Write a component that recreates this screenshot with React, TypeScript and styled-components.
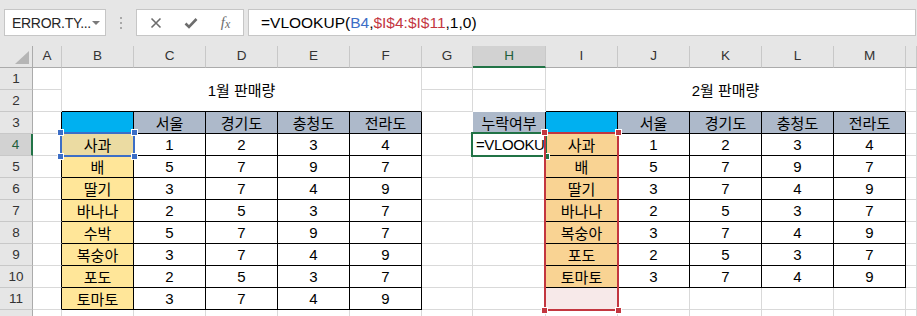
import React from 'react';
import styled, { createGlobalStyle } from 'styled-components';

const GREEN = '#217346';
const BLUE = '#3c6ec6';
const RED = '#c3363f';
const GRID = '#d9d9d9';
const CYAN = '#00b0f0';
const HEAD = '#adb9ca';
const YELLOW = '#ffe699';

const GlobalStyle = createGlobalStyle`
  html, body { margin: 0; padding: 0; background: #fff; overflow: hidden; }
  body { font-family: "Liberation Sans", "Noto Sans CJK KR", sans-serif; }
`;

const Toolbar = styled.div`
  height: 46px;
  box-sizing: border-box;
  background: #e6e6e6;
  display: flex;
  align-items: flex-start;
  padding: 9px 1px 0 4px;
`;

const NameBox = styled.div`
  width: 102px;
  height: 27px;
  box-sizing: border-box;
  background: #fff;
  border: 1px solid #c6c6c6;
  display: flex;
  align-items: center;
  justify-content: space-between;
  padding: 0 5px 0 7px;
  font: 14px "Liberation Sans", sans-serif;
  letter-spacing: -0.3px;
  color: #262626;
`;

const DropArrow = styled.span`
  width: 0;
  height: 0;
  border-left: 4px solid transparent;
  border-right: 4px solid transparent;
  border-top: 4px solid #7a7a7a;
`;

const Grip = styled.div`
  width: 30px;
  height: 27px;
  display: flex;
  flex-direction: column;
  align-items: center;
  justify-content: center;
  gap: 3px;
  span {
    width: 2px;
    height: 2px;
    background: #a8a8a8;
  }
`;

const ButtonGroup = styled.div`
  height: 27px;
  box-sizing: border-box;
  background: #fff;
  border: 1px solid #c6c6c6;
  display: flex;
  padding-left: 1px;
`;

const BarButton = styled.div`
  width: 35px;
  display: flex;
  align-items: center;
  justify-content: center;
  color: #6d6d6d;
`;

const Fx = styled.span`
  font: italic 15px "Liberation Serif", serif;
  color: #6d6d6d;
  sub {
    font-size: 12px;
    vertical-align: -1px;
  }
`;

const FormulaBox = styled.div`
  flex: 1;
  height: 27px;
  margin-left: 4px;
  box-sizing: border-box;
  background: #fff;
  border: 1px solid #c6c6c6;
  display: flex;
  align-items: center;
  padding: 1px 0 0 12px;
  font: 15.5px "Liberation Sans", sans-serif;
  color: #000;
`;

const Ref = styled.span<{ $color: string }>`
  color: ${p => p.$color};
`;

const Sheet = styled.div<{ $cols: string }>`
  display: grid;
  grid-template-columns: ${p => p.$cols};
  grid-template-rows: repeat(13, 22px);
  width: max-content;
`;

const Corner = styled.div`
  grid-column: 1;
  grid-row: 1;
  box-sizing: border-box;
  background: #e6e6e6;
  border-right: 1px solid #ababab;
  border-bottom: 1px solid #ababab;
  display: flex;
  align-items: flex-end;
  justify-content: flex-end;
  padding: 0 3px 3px 0;
`;

const ColHead = styled.div<{ $col: number; $active?: boolean }>`
  grid-column: ${p => p.$col};
  grid-row: 1;
  box-sizing: border-box;
  background: ${p => (p.$active ? '#d2d2d2' : '#e6e6e6')};
  border-right: 1px solid #c8c8c8;
  border-bottom: ${p => (p.$active ? `2px solid ${GREEN}` : '1px solid #ababab')};
  display: flex;
  align-items: center;
  justify-content: center;
  padding-bottom: ${p => (p.$active ? '1px' : '2px')};
  font: 13.5px "Liberation Sans", sans-serif;
  color: ${p => (p.$active ? '#1f5f3b' : '#333')};
`;

const RowHead = styled.div<{ $row: number; $active?: boolean }>`
  grid-column: 1;
  grid-row: ${p => p.$row};
  box-sizing: border-box;
  background: ${p => (p.$active ? '#d2d2d2' : '#e6e6e6')};
  border-bottom: 1px solid #c8c8c8;
  border-right: ${p => (p.$active ? `2px solid ${GREEN}` : '1px solid #ababab')};
  display: flex;
  align-items: center;
  justify-content: center;
  font: 13.5px "Liberation Sans", sans-serif;
  color: ${p => (p.$active ? '#1f5f3b' : '#333')};
`;

const Cell = styled.div<{
  $col: number;
  $row: number;
  $cs: number;
  $rs: number;
  $fill?: string;
  $right: string;
  $bottom: string;
  $left?: boolean;
}>`
  grid-column: ${p => p.$col} / span ${p => p.$cs};
  grid-row: ${p => p.$row} / span ${p => p.$rs};
  box-sizing: border-box;
  min-width: 0;
  background: ${p => p.$fill ?? '#fff'};
  border-right: 1px solid ${p => p.$right};
  border-bottom: 1px solid ${p => p.$bottom};
  display: flex;
  align-items: center;
  justify-content: ${p => (p.$left ? 'flex-start' : 'center')};
  padding-left: ${p => (p.$left ? '3px' : '0')};
  font: 15px "Liberation Sans", "Noto Sans CJK KR", sans-serif;
  letter-spacing: ${p => (p.$left ? '-0.4px' : '0')};
  color: #000;
  white-space: nowrap;
  overflow: hidden;
`;

const Frame = styled.div<{ $col: number; $row: number; $cs: number; $rs: number; $color: string }>`
  grid-column: ${p => p.$col} / span ${p => p.$cs};
  grid-row: ${p => p.$row} / span ${p => p.$rs};
  position: relative;
  z-index: 2;
  margin: -2px -1px -1px -2px;
  border: 2px solid ${p => p.$color};
  pointer-events: none;
`;

const Handle = styled.span<{ $color: string; $x: 'l' | 'r'; $y: 't' | 'b' }>`
  position: absolute;
  width: 5px;
  height: 5px;
  background: ${p => p.$color};
  border: 1px solid #fff;
  ${p => (p.$x === 'l' ? 'left: -5px;' : 'right: -5px;')}
  ${p => (p.$y === 't' ? 'top: -5px;' : 'bottom: -5px;')}
`;

// last column (N) only peeks in at the right edge
const COLS = ['A', 'B', 'C', 'D', 'E', 'F', 'G', 'H', 'I', 'J', 'K', 'L', 'M', ''];
const WIDTHS = [29, 72, 72, 72, 72, 72, 51, 73, 72, 72, 72, 72, 72, 11];
const ROWS = 12;
const VISIBLE_ROW_LABELS = 11;

const regions = ['서울', '경기도', '충청도', '전라도'];
const janRows: [string, number, number, number, number][] = [
  ['사과', 1, 2, 3, 4],
  ['배', 5, 7, 9, 7],
  ['딸기', 3, 7, 4, 9],
  ['바나나', 2, 5, 3, 7],
  ['수박', 5, 7, 9, 7],
  ['복숭아', 3, 7, 4, 9],
  ['포도', 2, 5, 3, 7],
  ['토마토', 3, 7, 4, 9],
];
const febRows = janRows.filter(r => r[0] !== '수박');

type CellData = { text?: string; fill?: string; left?: boolean };
const cells: Record<string, CellData> = {};
const key = (r: number, c: number) => `${r}:${c}`;
const put = (r: number, c: number, d: CellData) => {
  cells[key(r, c)] = d;
};

// 1월 table (B3:F11)
put(3, 1, { fill: CYAN });
regions.forEach((t, i) => put(3, 2 + i, { text: t, fill: HEAD }));
janRows.forEach(([name, ...nums], i) => {
  const r = 4 + i;
  put(r, 1, { text: name, fill: r === 4 ? '#ebdba2' : YELLOW });
  nums.forEach((n, j) => put(r, 2 + j, { text: String(n) }));
});

// 2월 table (I3:M10) + 누락여부
put(3, 7, { text: '누락여부', fill: HEAD });
put(4, 7, { text: '=VLOOKU', left: true });
put(3, 8, { fill: CYAN });
regions.forEach((t, i) => put(3, 9 + i, { text: t, fill: HEAD }));
febRows.forEach(([name, ...nums], i) => {
  const r = 4 + i;
  put(r, 8, { text: name, fill: '#f9d393' });
  nums.forEach((n, j) => put(r, 9 + j, { text: String(n) }));
});
put(11, 8, { fill: '#f7e9e9' });

const boxes = [
  [3, 1, 11, 5],
  [3, 8, 10, 12],
];
const merges = [
  { r: 1, c: 1, rs: 2, cs: 5, text: '1월 판매량' },
  { r: 1, c: 8, rs: 2, cs: 5, text: '2월 판매량' },
];

const bordered = (r: number, c: number) =>
  boxes.some(([r1, c1, r2, c2]) => r >= r1 && r <= r2 && c >= c1 && c <= c2);
const filled = (r: number, c: number) => !!cells[key(r, c)]?.fill;
const lineColor = (r1: number, c1: number, r2: number, c2: number) => {
  if (bordered(r1, c1) || bordered(r2, c2)) return '#000';
  if (filled(r1, c1) || filled(r2, c2)) return 'transparent';
  return GRID;
};
const covered = (r: number, c: number) =>
  merges.some(m => r >= m.r && r < m.r + m.rs && c >= m.c && c < m.c + m.cs && !(r === m.r && c === m.c));

const Corners = ({ color }: { color: string }) => (
  <>
    <Handle $color={color} $x="l" $y="t" />
    <Handle $color={color} $x="r" $y="t" />
    <Handle $color={color} $x="l" $y="b" />
    <Handle $color={color} $x="r" $y="b" />
  </>
);

export default function App() {
  const template = `33px ${WIDTHS.map(w => `${w}px`).join(' ')}`;
  const body: React.ReactNode[] = [];

  for (let r = 1; r <= ROWS; r++) {
    body.push(
      <RowHead key={`rh${r}`} $row={r + 1} $active={r === 4}>
        {r <= VISIBLE_ROW_LABELS ? r : ''}
      </RowHead>
    );
    COLS.forEach((_, c) => {
      if (covered(r, c)) return;
      const m = merges.find(x => x.r === r && x.c === c);
      const rs = m ? m.rs : 1;
      const cs = m ? m.cs : 1;
      const er = r + rs - 1;
      const ec = c + cs - 1;
      const d = cells[key(r, c)] ?? {};
      body.push(
        <Cell
          key={key(r, c)}
          $col={c + 2}
          $row={r + 1}
          $cs={cs}
          $rs={rs}
          $fill={d.fill}
          $left={d.left}
          $right={lineColor(er, ec, er, ec + 1)}
          $bottom={lineColor(er, ec, er + 1, ec)}
        >
          {m ? m.text : d.text}
        </Cell>
      );
    });
  }

  return (
    <>
      <GlobalStyle />
      <Toolbar>
        <NameBox>
          <span>ERROR.TY...</span>
          <DropArrow />
        </NameBox>
        <Grip>
          <span />
          <span />
          <span />
        </Grip>
        <ButtonGroup>
          <BarButton>
            <svg width="12" height="12" viewBox="0 0 12 12">
              <path d="M1.5 1.5 L10.5 10.5 M10.5 1.5 L1.5 10.5" stroke="currentColor" strokeWidth="1.6" />
            </svg>
          </BarButton>
          <BarButton>
            <svg width="14" height="12" viewBox="0 0 14 12">
              <path d="M1.5 6.5 L5 10 L12.5 2" stroke="currentColor" strokeWidth="2.6" fill="none" />
            </svg>
          </BarButton>
          <BarButton>
            <Fx>
              f<sub>x</sub>
            </Fx>
          </BarButton>
        </ButtonGroup>
        <FormulaBox>
          =VLOOKUP(<Ref $color={BLUE}>B4</Ref>,<Ref $color={RED}>$I$4:$I$11</Ref>,1,0)
        </FormulaBox>
      </Toolbar>
      <Sheet $cols={template}>
        <Corner>
          <svg width="14" height="13" viewBox="0 0 14 13">
            <polygon points="14,0 14,13 0,13" fill="#b5b5b5" />
          </svg>
        </Corner>
        {COLS.map((name, i) => (
          <ColHead key={`ch${i}`} $col={i + 2} $active={name === 'H'}>
            {name}
          </ColHead>
        ))}
        {body}
        <Frame $col={9} $row={5} $cs={1} $rs={1} $color={GREEN}>
          <Handle $color={GREEN} $x="r" $y="b" />
        </Frame>
        <Frame $col={3} $row={5} $cs={1} $rs={1} $color={BLUE}>
          <Corners color={BLUE} />
        </Frame>
        <Frame $col={10} $row={5} $cs={1} $rs={8} $color={RED}>
          <Corners color={RED} />
        </Frame>
      </Sheet>
    </>
  );
}
